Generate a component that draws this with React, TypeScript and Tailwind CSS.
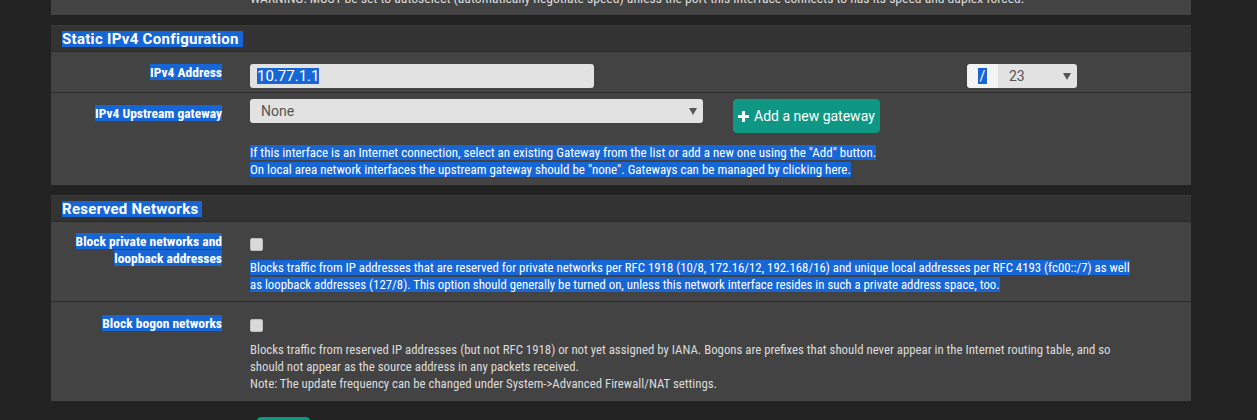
import React from "react";

const HL = "bg-[#1766d6] text-white";

function Caret() {
  return (
    <svg width="8" height="7" viewBox="0 0 8 7" className="shrink-0">
      <path d="M0 0 H8 L4 7 Z" fill="#555555" />
    </svg>
  );
}

function Checkbox() {
  return <div className="h-[13px] w-[13px] rounded-[2px] bg-[#d9d9d9] border border-[#bdbdbd]" />;
}

function Heading({ title }: { title: string }) {
  return (
    <div className="flex h-[27px] items-center border-t border-b border-t-[#3b3b3b] border-b-[#2a2a2a] bg-[#333333] pl-[11px]">
      <span className={`${HL} font-['Roboto',sans-serif] text-[15px] font-bold leading-[16px] tracking-[0.3px] pr-[4px]`}>
        {title}
      </span>
    </div>
  );
}

export default function App() {
  return (
    <div className="h-[420px] overflow-hidden bg-[#222222] font-['Roboto',sans-serif]">
      <div className="ml-[51px] w-[1140px]">
        {/* previous panel bottom */}
        <div className="h-[15px] overflow-hidden bg-[#434343]">
          <div className="-mt-[10px] ml-[199px] whitespace-nowrap font-['Roboto_Condensed','Liberation_Sans_Narrow',sans-serif] text-[13.6px] leading-[17px] text-[#dddddd]">
            WARNING: MUST be set to autoselect (automatically negotiate speed) unless the port this interface connects to has its speed and duplex forced.
          </div>
        </div>

        {/* Static IPv4 Configuration */}
        <div className="mt-[10px] bg-[#434343]">
          <Heading title="Static IPv4 Configuration" />
          <div className="flex h-[41px] border-b border-[#2b2b2b]">
            <div className="w-[171px] pt-[12px] text-right font-['Roboto_Condensed','Liberation_Sans_Narrow',sans-serif] text-[13.5px] font-bold leading-[16px] text-white">
              <span className={HL}>IPv4 Address</span>
            </div>
            <div className="ml-[28px] flex pt-[12px]">
              <div className="flex h-[24px] w-[344px] items-center rounded-[3px] bg-[#e2e2e2] pl-[7px]">
                <span className={`${HL} text-[15px] leading-[16px]`}>10.77.1.1</span>
              </div>
              <div className="ml-[373px] flex h-[24px]">
                <div className="flex w-[31px] items-center justify-center rounded-l-[3px] bg-[#f4f4f4] text-[14px]">
                  <span className={`${HL} px-[2px] leading-[16px]`}>/</span>
                </div>
                <div className="flex w-[79px] items-center justify-between rounded-r-[3px] bg-[#e2e2e2] pl-[11px] pr-[6px] text-[14px] text-[#555555]">
                  <span>23</span>
                  <Caret />
                </div>
              </div>
            </div>
          </div>
          <div className="flex h-[92px]">
            <div className="w-[171px] pt-[12px] text-right font-['Roboto_Condensed','Liberation_Sans_Narrow',sans-serif] text-[13.5px] font-bold leading-[16px] text-white">
              <span className={HL}>IPv4 Upstream gateway</span>
            </div>
            <div className="ml-[28px] pt-[6px]">
              <div className="flex items-start">
                <div className="flex h-[24px] w-[453px] items-center justify-between rounded-[3px] bg-[#e2e2e2] pl-[11px] pr-[6px] text-[14px] text-[#555555]">
                  <span>None</span>
                  <Caret />
                </div>
                <button className="ml-[30px] flex h-[34px] items-center gap-[5px] rounded-[4px] bg-[#0f9784] pl-[5px] pr-[5px] text-[14px] text-white">
                  <svg width="11" height="11" viewBox="0 0 10 10">
                    <path d="M3.6 0 H6.4 V3.6 H10 V6.4 H6.4 V10 H3.6 V6.4 H0 V3.6 H3.6 Z" fill="#ffffff" />
                  </svg>
                  Add a new gateway
                </button>
              </div>
              <div className="mt-[11px] whitespace-nowrap font-['Roboto_Condensed','Liberation_Sans_Narrow',sans-serif] text-[13px] leading-[17px]">
                <div><span className={HL}>If this interface is an Internet connection, select an existing Gateway from the list or add a new one using the "Add" button.</span></div>
                <div><span className={HL}>On local area network interfaces the upstream gateway should be "none". Gateways can be managed by clicking here.</span></div>
              </div>
            </div>
          </div>
        </div>

        {/* Reserved Networks */}
        <div className="mt-[10px] bg-[#434343]">
          <Heading title="Reserved Networks" />
          <div className="flex h-[80px] border-b border-[#2b2b2b]">
            <div className="w-[171px] pt-[11px] text-right font-['Roboto_Condensed','Liberation_Sans_Narrow',sans-serif] text-[13.5px] font-bold leading-[17px] text-white">
              <div><span className={HL}>Block private networks and</span></div>
              <div><span className={HL}>loopback addresses</span></div>
            </div>
            <div className="ml-[28px] pt-[16px]">
              <Checkbox />
              <div className="mt-[8px] whitespace-nowrap font-['Roboto_Condensed','Liberation_Sans_Narrow',sans-serif] text-[12.8px] leading-[17px]">
                <div><span className={HL}>Blocks traffic from IP addresses that are reserved for private networks per RFC 1918 (10/8, 172.16/12, 192.168/16) and unique local addresses per RFC 4193 (fc00::/7) as well</span></div>
                <div><span className={HL}>as loopback addresses (127/8). This option should generally be turned on, unless this network interface resides in such a private address space, too.</span></div>
              </div>
            </div>
          </div>
          <div className="flex h-[99px]">
            <div className="w-[171px] pt-[13px] text-right font-['Roboto_Condensed','Liberation_Sans_Narrow',sans-serif] text-[13.5px] font-bold leading-[16px] text-white">
              <span className={HL}>Block bogon networks</span>
            </div>
            <div className="ml-[28px] pt-[17px]">
              <Checkbox />
              <div className="mt-[9px] whitespace-nowrap font-['Roboto_Condensed','Liberation_Sans_Narrow',sans-serif] text-[12.8px] leading-[17px] text-[#dcdcdc]">
                <div>Blocks traffic from reserved IP addresses (but not RFC 1918) or not yet assigned by IANA. Bogons are prefixes that should never appear in the Internet routing table, and so</div>
                <div>should not appear as the source address in any packets received.</div>
                <div>Note: The update frequency can be changed under System-&gt;Advanced Firewall/NAT settings.</div>
              </div>
            </div>
          </div>
        </div>

        <div className="ml-[206px] mt-[16px] h-[30px] w-[53px] rounded-[4px] bg-[#0f9784]" />
      </div>
    </div>
  );
}
